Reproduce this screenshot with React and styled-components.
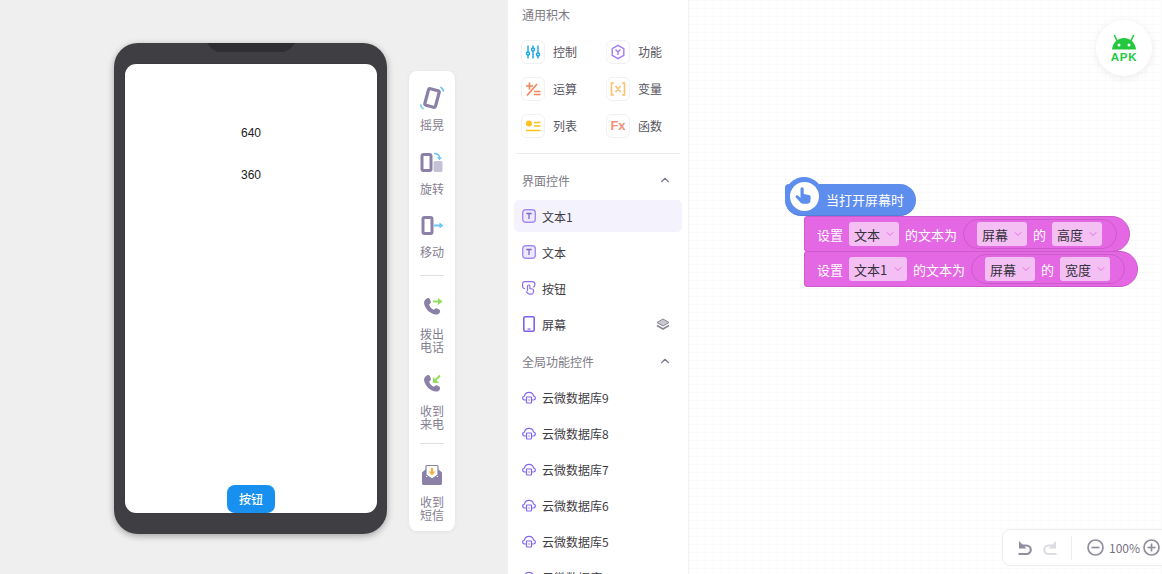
import React from 'react';
import styled, { createGlobalStyle } from 'styled-components';
import { ChevronUp, ChevronDown } from 'lucide-react';

const Global = createGlobalStyle`
  html, body { margin: 0; padding: 0; width: 1162px; height: 574px; overflow: hidden; }
  body { font-family: "Noto Sans CJK SC", "Liberation Sans", sans-serif; }
  * { box-sizing: border-box; }
`;

const Page = styled.div`
  display: flex;
  width: 1162px;
  height: 574px;
  overflow: hidden;
  background: #fff;
`;

/* ---------- stage ---------- */
const Stage = styled.section`
  width: 508px;
  height: 574px;
  flex: none;
  background: #efefef;
  display: flex;
  align-items: flex-start;
  padding: 43px 0 0 114px;
  gap: 22px;
`;
const Phone = styled.div`
  position: relative;
  width: 273px;
  height: 491px;
  flex: none;
  background: #3f3e43;
  border-radius: 24px;
  box-shadow: 0 2px 7px rgba(0, 0, 0, 0.32);
  padding: 21px 10px 21px 11px;
`;
const Notch = styled.div`
  position: absolute;
  top: 0;
  left: 93px;
  width: 88px;
  height: 9px;
  background: #2f2e33;
  clip-path: polygon(0 0, 100% 0, 94% 70%, 88% 100%, 12% 100%, 6% 70%);
`;
const Screen = styled.div`
  width: 252px;
  height: 449px;
  background: #fff;
  border-radius: 11px;
  display: flex;
  flex-direction: column;
  align-items: center;
  padding-top: 61px;
  box-shadow: 0 0 1px rgba(0, 0, 0, 0.5);
`;
const ScreenText = styled.div`
  font: 12px/16px "Liberation Sans", Arial, sans-serif;
  color: #222;
  height: 42px;
`;
const PhoneButton = styled.button`
  margin-top: auto;
  width: 48px;
  height: 28px;
  border: 0;
  padding: 0;
  border-radius: 8px;
  background: #1890f0;
  color: #fff;
  font: 500 12px/28px "Noto Sans CJK SC", sans-serif;
`;
const Palette = styled.aside`
  margin-top: 28px;
  width: 46px;
  height: 460px;
  flex: none;
  background: #fff;
  border-radius: 8px;
  box-shadow: 0 1px 4px rgba(0, 0, 0, 0.06);
  display: flex;
  flex-direction: column;
  align-items: center;
  padding-top: 15px;
`;
const PaletteItem = styled.div`
  display: flex;
  flex-direction: column;
  align-items: center;
  height: ${(p) => p.$h}px;
  svg { display: block; flex: none; overflow: visible; }
`;
const PaletteLabel = styled.div`
  margin-top: 8px;
  width: 26px;
  font-size: 12px;
  line-height: 13px;
  color: #857e91;
  text-align: center;
`;
const PaletteRule = styled.div`
  width: 24px;
  height: 1px;
  background: #e2e0e6;
  flex: none;
  margin-bottom: ${(p) => p.$mb}px;
`;

/* ---------- panel ---------- */
const Panel = styled.section`
  width: 180px;
  height: 574px;
  flex: none;
  background: #fff;
  padding: 0 6px;
  overflow: hidden;
`;
const PanelTitle = styled.div`
  height: 30px;
  padding: 0 8px;
  font-size: 12px;
  line-height: 30px;
  color: #7d7a85;
`;
const Blocks = styled.div`
  display: grid;
  grid-template-columns: 85px 74px;
  grid-auto-rows: 37px;
  padding: 3px 0 0 7px;
`;
const BlockKind = styled.div`
  display: flex;
  align-items: center;
  gap: 8px;
  font-size: 12px;
  color: #57545e;
`;
const KindIcon = styled.div`
  width: 24px;
  height: 24px;
  flex: none;
  border: 1px solid #f1f0f4;
  border-radius: 6px;
  display: flex;
  align-items: center;
  justify-content: center;
`;
const FxText = styled.span`
  font: 700 13px/1 "Liberation Sans", sans-serif;
  color: #f58f7b;
`;
const Divider = styled.div`
  margin: 9px 2px 0;
  height: 1px;
  background: #ececf0;
`;
const GroupHead = styled.div`
  display: flex;
  align-items: center;
  justify-content: space-between;
  height: 36px;
  padding: 0 10px 0 8px;
  margin-top: ${(p) => p.$mt || 0}px;
  font-size: 12px;
  color: #7d7a85;
  svg { color: #807b8b; }
`;
const Row = styled.div`
  display: flex;
  align-items: center;
  height: ${(p) => (p.$active ? 32 : 36)}px;
  margin: ${(p) => (p.$active ? '2px 0' : '0')};
  padding: 0 12px 0 8px;
  gap: 6px;
  border-radius: 5px;
  background: ${(p) => (p.$active ? '#f4f2fd' : 'transparent')};
  font-size: 12px;
  color: #3f3d45;
  svg { flex: none; }
`;
const RowText = styled.span`
  flex: 1;
`;

/* ---------- canvas ---------- */
const Canvas = styled.section`
  position: relative;
  flex: 1;
  height: 574px;
  overflow: hidden;
  border-left: 1px solid #f4f4f6;
  background-color: #fff;
  background-image:
    linear-gradient(#fafafa 1px, transparent 1px),
    linear-gradient(90deg, #fafafa 1px, transparent 1px);
  background-size: 8px 8px;
`;
const ApkBadge = styled.div`
  position: absolute;
  top: 20px;
  left: 407px;
  width: 56px;
  height: 56px;
  border-radius: 50%;
  background: #fff;
  box-shadow: 0 2px 8px rgba(0, 0, 0, 0.08);
  display: flex;
  flex-direction: column;
  align-items: center;
  padding-top: 14px;
`;
const ApkText = styled.div`
  font: 700 11.5px/12px "Liberation Sans", sans-serif;
  letter-spacing: 0.8px;
  color: #22c93f;
  margin-top: 1px;
`;
const BlockStack = styled.div`
  position: absolute;
  left: 96px;
  top: 177px;
  width: 360px;
`;
const Hat = styled.div`
  position: relative;
  width: 131px;
  height: 32px;
  margin-top: 7px;
  background: #5d8ded;
  border-radius: 4px 16px 16px 16px;
  display: flex;
  align-items: center;
  padding-left: 41px;
  color: #fff;
  font-size: 13px;
  border-bottom: 1px solid #5480dc;
`;
const HatHead = styled.div`
  position: absolute;
  left: 0;
  top: -7px;
  width: 38px;
  height: 38px;
  border-radius: 50%;
  background: #5d8ded;
  display: flex;
  align-items: center;
  justify-content: center;
`;
const HatDisc = styled.div`
  width: 29px;
  height: 29px;
  border-radius: 50%;
  background: #fff;
  display: flex;
  align-items: center;
  justify-content: center;
`;
const Statement = styled.div`
  margin-left: 19px;
  width: ${(p) => p.$w}px;
  height: 36px;
  background: #e468e4;
  border: 1px solid #cd5acd;
  border-radius: 3px 18px 18px 3px;
  display: flex;
  align-items: center;
  padding-left: 12px;
  gap: 6px;
  color: #fff;
  font-size: 13px;
  white-space: nowrap;
  & + & { margin-top: -1px; }
`;
const Slot = styled.div`
  height: 30px;
  padding: 0 14px 0 13px;
  display: flex;
  align-items: center;
  gap: 6px;
  border: 1px solid #cb5bcb;
  border-radius: 15px;
`;
const Drop = styled.div`
  width: ${(p) => p.$w}px;
  height: 24px;
  flex: none;
  border-radius: 3px;
  background: #f4c0f4;
  color: #33303a;
  display: flex;
  align-items: center;
  padding: 0 3px 0 5px;
  justify-content: space-between;
  font-size: 13px;
  svg { color: #e070e0; }
`;
const ZoomBar = styled.div`
  position: absolute;
  left: 313px;
  top: 529px;
  width: 170px;
  height: 37px;
  background: #fff;
  border: 1px solid #efeff2;
  border-radius: 8px;
  display: flex;
  align-items: center;
  padding-left: 13px;
  svg { flex: none; }
`;
const HistoryButtons = styled.div`
  display: flex;
  gap: 7px;
`;
const BarRule = styled.div`
  width: 1px;
  height: 24px;
  background: #eeeef1;
  margin: 0 15px 0 12px;
`;
const Percent = styled.div`
  font-size: 12px;
  color: #76727f;
  margin: 0 3px 0 5px;
`;

/* ---------- icons ---------- */
const G = '#8a80a8';
const B = '#6cc4f7';

const ShakeIcon = () => (
  <svg width="24" height="24" viewBox="0 0 24 24" fill="none">
    <rect x="6.5" y="3.5" width="11" height="17" rx="1.6" transform="rotate(15 12 12)" stroke={G} strokeWidth="3.2" />
    <path d="M20.5 1c1.7 1.1 2.8 2.700 3 4.600M3.500 23c-1.700-1.100-2.800-2.700-3-4.600" stroke={B} strokeWidth="1.500" />
  </svg>
);
const TurnIcon = () => (
  <svg width="24" height="22" viewBox="0 0 24 22" fill="none">
    <rect x="2" y="2.5" width="9" height="16" rx="1.5" stroke={G} strokeWidth="3" />
    <rect x="13.5" y="9" width="9" height="11" rx="1.5" fill="#c6c1d6" />
    <path d="M14 1.5c3.5 0 5.5 1.5 5.5 4.5" stroke={B} strokeWidth="1.5" />
    <path d="M17 5.2h5l-2.5 3z" fill={B} />
  </svg>
);
const MoveIcon = () => (
  <svg width="24" height="22" viewBox="0 0 24 22" fill="none">
    <rect x="3" y="2.5" width="9" height="16" rx="1.5" stroke={G} strokeWidth="3" />
    <path d="M14 10.5h7" stroke={B} strokeWidth="2" />
    <path d="M19.5 7.5l4 3-4 3z" fill={B} />
  </svg>
);
const handset = 'M7.2 3.2c1.2-.6 2.2-.1 2.7 1l.9 2.2c.3.8.1 1.5-.5 2l-1.2 1c.7 2.4 2.4 4.3 4.8 5.4l1.1-1c.6-.6 1.4-.7 2.1-.3l2 1.1c1 .6 1.3 1.6.8 2.6-.8 1.9-2.7 2.7-4.7 2.2C9.7 18.8 5.1 13.9 4.1 8.6 3.7 6.2 5 4.2 7.2 3.2z';
const CallOutIcon = () => (
  <svg width="24" height="24" viewBox="0 0 24 24" fill="none">
    <path d={handset} fill={G} />
    <path d="M13 6.5h7" stroke="#93dd5c" strokeWidth="2" />
    <path d="M18 3l4.5 3.5L18 10z" fill="#93dd5c" />
  </svg>
);
const CallInIcon = () => (
  <svg width="24" height="24" viewBox="0 0 24 24" fill="none">
    <path d={handset} fill={G} />
    <path d="M20 3.5l-5 5" stroke="#93dd5c" strokeWidth="2" />
    <path d="M13 5v6h6z" fill="#93dd5c" />
  </svg>
);
const InboxIcon = () => (
  <svg width="24" height="24" viewBox="0 0 24 24" fill="none">
    <path d="M2 9.5L6 6v8h12V6l4 3.5v11a1.5 1.5 0 0 1-1.5 1.5h-17A1.5 1.5 0 0 1 2 20.500z" fill={G} />
    <path d="M6 12V3.500A1 1 0 0 1 7 2.500h10a1 1 0 0 1 1 1V12l-6 4z" fill="#fff" stroke={G} strokeWidth="1.2" />
    <path d="M12 5v5" stroke="#f7b13c" strokeWidth="2.2" />
    <path d="M8.7 8.5h6.600L12 12.500z" fill="#f7b13c" />
  </svg>
);
const ControlIcon = () => (
  <svg width="16" height="16" viewBox="0 0 16 16" fill="none" stroke="#16a5ea" strokeWidth="1.4">
    <path d="M3 1.500v13M8 1.500v13M13 1.500v13" />
    <circle cx="3" cy="9.500" r="1.500" fill="#fff" />
    <circle cx="8" cy="5.500" r="1.500" fill="#fff" />
    <circle cx="13" cy="10.500" r="1.500" fill="#fff" />
  </svg>
);
const FunctionIcon = () => (
  <svg width="16" height="16" viewBox="0 0 16 16" fill="none" stroke="#a27bf6" strokeWidth="1.4">
    <path d="M8 1.300l5.800 3.300v6.800L8 14.700l-5.800-3.300V4.600z" />
    <path d="M5.500 5.500L8 8l2.500-2.500M8 8v3" />
  </svg>
);
const MathIcon = () => (
  <svg width="16" height="16" viewBox="0 0 16 16" fill="none" stroke="#f58258" strokeWidth="1.6">
    <path d="M1 5h7M4.500 1.500v7M2 14.500L12 3M9 10.500h6.500M9 13.500h6.500" />
  </svg>
);
const VarIcon = () => (
  <svg width="16" height="16" viewBox="0 0 16 16" fill="none" stroke="#fbc274" strokeWidth="1.6">
    <path d="M4 2H1.500v12H4M12 2h2.500v12H12M5.500 5l5 6M10.500 5l-5 6" />
  </svg>
);
const ListIcon = () => (
  <svg width="16" height="16" viewBox="0 0 16 16" fill="none">
    <circle cx="4" cy="5.500" r="3" fill="#fcc21b" />
    <path d="M9 4.500h6.500M9 8h6.500M1 12.500h14.500" stroke="#fcc21b" strokeWidth="1.4" />
  </svg>
);
const TextIcon = () => (
  <svg width="14" height="14" viewBox="0 0 14 14" fill="none">
    <rect x="0.700" y="0.700" width="12.600" height="12.600" rx="3" fill="#eeeafd" stroke="#a58cf5" strokeWidth="1.4" />
    <path d="M4.300 4.500h5.400M7 4.500v5.500" stroke="#7f67c9" strokeWidth="1.3" />
  </svg>
);
const TapIcon = () => (
  <svg width="14" height="14" viewBox="0 0 14 14" fill="none" stroke="#8d6ff2" strokeWidth="1.2">
    <path d="M3 7.600H2.500A2 2 0 0 1 .6 5.500V3A2.200 2.200 0 0 1 2.800.7h7.400A2.800 2.800 0 0 1 13 3.500c0 1.300-.8 2.400-2 2.600" />
    <path d="M5.500 10V5.200a1.200 1.200 0 0 1 2.400 0V7.500l2.500.5c.8.200 1.300.8 1.200 1.600l-.4 2.200c-.1.800-.8 1.400-1.600 1.400H7.500c-.6 0-1-.2-1.400-.7L4.200 10.500" />
  </svg>
);
const PhoneIcon = () => (
  <svg width="14" height="16" viewBox="0 0 14 16" fill="none">
    <rect x="1.800" y="0.800" width="10.400" height="14.400" rx="1.500" stroke="#7f5ff0" strokeWidth="1.6" />
    <path d="M5.500 13h3" stroke="#7f5ff0" strokeWidth="1.2" />
  </svg>
);
const StackIcon = () => (
  <svg width="14" height="14" viewBox="0 0 14 14" fill="none">
    <path d="M1 8.500L7 12l6-3.500" stroke="#8a8593" strokeWidth="1.6" />
    <path d="M7 2l6 3.500L7 9 1 5.500z" fill="#c9c7cf" stroke="#8a8593" strokeWidth="1" />
  </svg>
);
const CloudIcon = () => (
  <svg width="14" height="14" viewBox="0 0 14 14" fill="none" stroke="#8067ee" strokeWidth="1.2">
    <path d="M4 10H2.800a2 2 0 0 1-.3-4a4.600 4.600 0 0 1 9 0a2 2 0 0 1-.3 4H10" />
    <rect x="4.500" y="7" width="5" height="6" rx="0.700" />
    <path d="M6.300 10h1.400" />
  </svg>
);
const HandIcon = () => (
  <svg width="20" height="20" viewBox="0 0 20 20">
    <path d="M6.500 2.800a1.600 1.600 0 0 1 3.200 0v5.200l5 .9c1.300.2 2.100 1.300 2 2.500l-.4 3.800c-.2 1.500-1.300 2.500-2.800 2.500H8.700c-1 0-1.700-.4-2.300-1.100L2 11.600c-.6-.7-.5-1.600.1-2.100.7-.5 1.600-.4 2.200.2l2.200 2.200z" fill="#5d8ded" />
  </svg>
);
const AndroidIcon = () => (
  <svg width="26" height="16" viewBox="0 0 26 16">
    <path d="M1 15.500C1.500 9 6.500 4 13 4s11.500 5 12 11.500z" fill="#22c93f" />
    <path d="M6 6.500L3.500 1.500M20 6.500l2.500-5" stroke="#22c93f" strokeWidth="1.6" strokeLinecap="round" />
    <circle cx="8" cy="11" r="1.500" fill="#fff" />
    <circle cx="18" cy="11" r="1.500" fill="#fff" />
  </svg>
);
const UndoIcon = ({ flip, color }) => (
  <svg width="18" height="18" viewBox="0 0 18 18" fill="none" style={flip ? { transform: 'scaleX(-1)' } : undefined}>
    <path d="M3 2v7.500h7.500z" fill={color} />
    <path d="M5 6.500h5.500a4.200 4.200 0 0 1 0 8.500H2.500" stroke={color} strokeWidth="2.2" />
  </svg>
);
const RoundIcon = ({ plus }) => (
  <svg width="17" height="17" viewBox="0 0 17 17" fill="none" stroke="#908ea0" strokeWidth="1.7">
    <circle cx="8.500" cy="8.500" r="7.500" />
    <path d="M4.500 8.500h8" />
    {plus && <path d="M8.500 4.500v8" />}
  </svg>
);

const tools = [
  { label: '摇晃', icon: <ShakeIcon />, h: 68 },
  { label: '旋转', icon: <TurnIcon />, h: 65 },
  { label: '移动', icon: <MoveIcon />, h: 61 },
];
const clouds = [9, 8, 7, 6, 5, 4];
const chev = <ChevronDown size={12} strokeWidth={2} />;

export default function App() {
  return (
    <Page>
      <Global />
      <Stage>
        <Phone>
          <Notch />
          <Screen>
            <ScreenText>640</ScreenText>
            <ScreenText>360</ScreenText>
            <PhoneButton>按钮</PhoneButton>
          </Screen>
        </Phone>
        <Palette>
          {tools.map((t) => (
            <PaletteItem key={t.label} $h={t.h}>
              {t.icon}
              <PaletteLabel>{t.label}</PaletteLabel>
            </PaletteItem>
          ))}
          <PaletteRule $mb={19} />
          <PaletteItem $h={79}>
            <CallOutIcon />
            <PaletteLabel>拨出电话</PaletteLabel>
          </PaletteItem>
          <PaletteItem $h={73}>
            <CallInIcon />
            <PaletteLabel>收到来电</PaletteLabel>
          </PaletteItem>
          <PaletteRule $mb={19} />
          <PaletteItem $h={70}>
            <InboxIcon />
            <PaletteLabel>收到短信</PaletteLabel>
          </PaletteItem>
        </Palette>
      </Stage>

      <Panel>
        <PanelTitle>通用积木</PanelTitle>
        <Blocks>
          <BlockKind><KindIcon><ControlIcon /></KindIcon>控制</BlockKind>
          <BlockKind><KindIcon><FunctionIcon /></KindIcon>功能</BlockKind>
          <BlockKind><KindIcon><MathIcon /></KindIcon>运算</BlockKind>
          <BlockKind><KindIcon><VarIcon /></KindIcon>变量</BlockKind>
          <BlockKind><KindIcon><ListIcon /></KindIcon>列表</BlockKind>
          <BlockKind><KindIcon><FxText>Fx</FxText></KindIcon>函数</BlockKind>
        </Blocks>
        <Divider />
        <GroupHead $mt={8}>界面控件<ChevronUp size={14} strokeWidth={2} /></GroupHead>
        <Row $active><TextIcon /><RowText>文本1</RowText></Row>
        <Row><TextIcon /><RowText>文本</RowText></Row>
        <Row><TapIcon /><RowText>按钮</RowText></Row>
        <Row><PhoneIcon /><RowText>屏幕</RowText><StackIcon /></Row>
        <GroupHead $mt={1}>全局功能控件<ChevronUp size={14} strokeWidth={2} /></GroupHead>
        {clouds.map((n) => (
          <Row key={n}><CloudIcon /><RowText>云微数据库{n}</RowText></Row>
        ))}
      </Panel>

      <Canvas>
        <BlockStack>
          <Hat>
            <HatHead><HatDisc><HandIcon /></HatDisc></HatHead>
            当打开屏幕时
          </Hat>
          <Statement $w={326}>
            设置
            <Drop $w={50}>文本{chev}</Drop>
            的文本为
            <Slot>
              <Drop $w={50}>屏幕{chev}</Drop>
              的
              <Drop $w={50}>高度{chev}</Drop>
            </Slot>
          </Statement>
          <Statement $w={334}>
            设置
            <Drop $w={58}>文本1{chev}</Drop>
            的文本为
            <Slot>
              <Drop $w={50}>屏幕{chev}</Drop>
              的
              <Drop $w={50}>宽度{chev}</Drop>
            </Slot>
          </Statement>
        </BlockStack>
        <ApkBadge>
          <AndroidIcon />
          <ApkText>APK</ApkText>
        </ApkBadge>
        <ZoomBar>
          <HistoryButtons>
            <UndoIcon color="#908ea0" />
            <UndoIcon flip color="#dcdce2" />
          </HistoryButtons>
          <BarRule />
          <RoundIcon />
          <Percent>100%</Percent>
          <RoundIcon plus />
        </ZoomBar>
      </Canvas>
    </Page>
  );
}
